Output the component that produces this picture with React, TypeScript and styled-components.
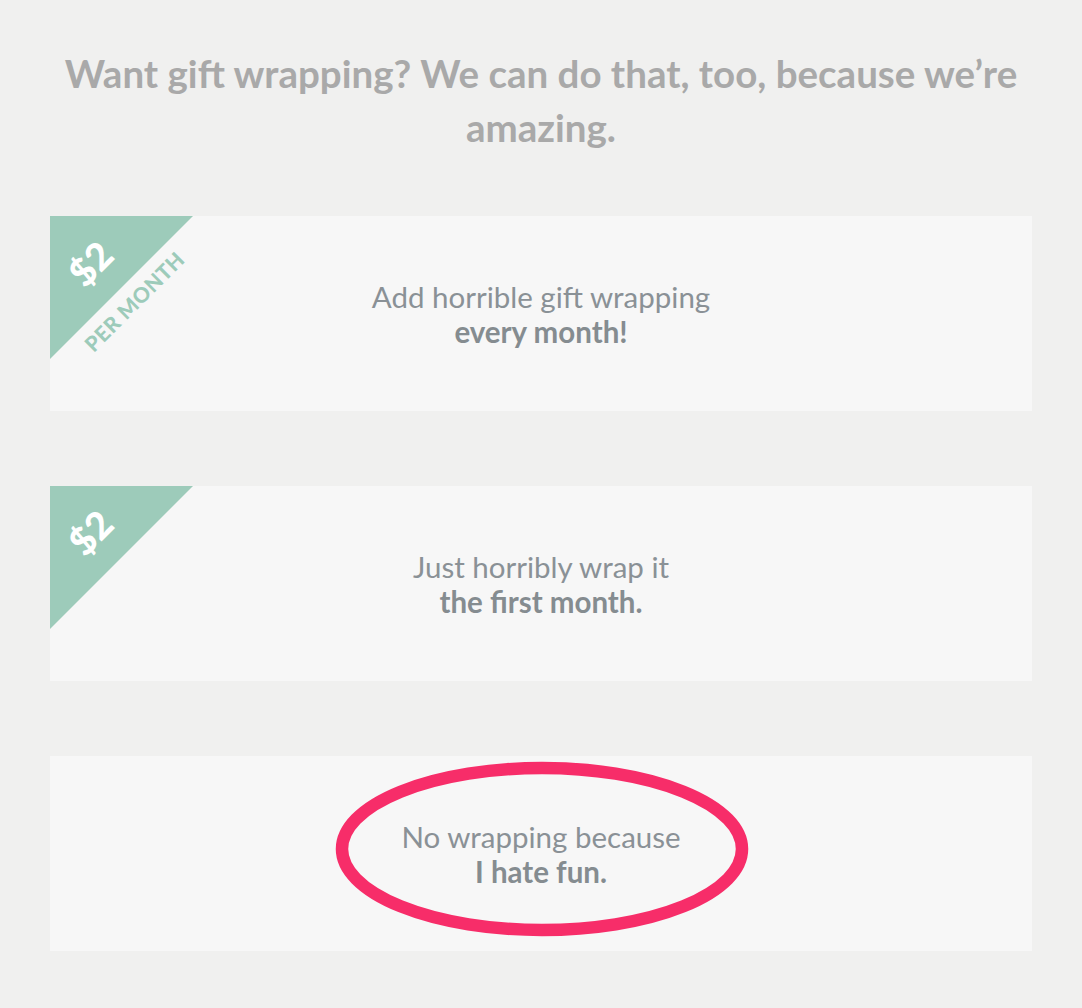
import React from "react";
import styled, { createGlobalStyle } from "styled-components";

const Global = createGlobalStyle`
  html, body { margin: 0; padding: 0; background: #f0f0ef; }
  body { font-family: Lato, "Liberation Sans", sans-serif; }
`;

const Page = styled.main`
  width: 1082px;
  box-sizing: border-box;
  padding: 46px 50px 56px;
  display: flex;
  flex-direction: column;
  align-items: stretch;
`;

const Heading = styled.h1`
  margin: 0 0 62px;
  text-align: center;
  font-size: 38.5px;
  line-height: 54px;
  font-weight: 700;
  color: #a9a9a9;
  white-space: nowrap;
`;

const List = styled.div`
  display: flex;
  flex-direction: column;
  gap: 75px;
`;

const Card = styled.div`
  position: relative;
  height: 195px;
  background: #f7f7f7;
  display: flex;
  align-items: center;
  justify-content: center;
  overflow: hidden;
`;

const Copy = styled.p`
  margin: 0;
  text-align: center;
  font-size: 29.5px;
  line-height: 35px;
  color: #8a9196;
  font-weight: 400;
  position: relative;
  z-index: 1;
`;

const Strong = styled.strong`
  display: block;
  font-weight: 700;
  color: #858c90;
`;

const Corner = styled.div`
  position: absolute;
  left: 0;
  top: 0;
  width: 143px;
  height: 143px;
  background: #9dcbba;
  clip-path: polygon(0 0, 100% 0, 0 100%);
`;

const Price = styled.span<{ $x: number; $y: number }>`
  position: absolute;
  left: ${(p) => p.$x}px;
  top: ${(p) => p.$y}px;
  transform: translate(-50%, -50%) rotate(-45deg);
  color: #ffffff;
  font-weight: 900;
  font-size: 38px;
  line-height: 1;
  white-space: nowrap;
`;

const Per = styled.span<{ $x: number; $y: number }>`
  position: absolute;
  left: ${(p) => p.$x}px;
  top: ${(p) => p.$y}px;
  transform: translate(-50%, -50%) rotate(-45deg);
  color: #9dcbba;
  font-weight: 900;
  font-size: 21px;
  letter-spacing: 0.5px;
  line-height: 1;
  white-space: nowrap;
`;

const Ring = styled.svg`
  position: absolute;
  left: 0;
  top: 0;
  width: 100%;
  height: 100%;
  pointer-events: none;
  z-index: 2;
`;

export default function App() {
  return (
    <>
      <Global />
      <Page>
        <Heading>
          Want gift wrapping? We can do that, too, because we’re
          <br />
          amazing.
        </Heading>
        <List>
          <Card>
            <Corner />
            <Price $x={40} $y={47}>$2</Price>
            <Per $x={84} $y={85}>PER MONTH</Per>
            <Copy>
              Add horrible gift wrapping
              <Strong>every month!</Strong>
            </Copy>
          </Card>
          <Card>
            <Corner />
            <Price $x={40} $y={46}>$2</Price>
            <Copy>
              Just horribly wrap it
              <Strong>the first month.</Strong>
            </Copy>
          </Card>
          <Card>
            <Copy>
              No wrapping because
              <Strong>I hate fun.</Strong>
            </Copy>
            <Ring viewBox="0 0 982 195" preserveAspectRatio="none">
              <ellipse cx="492" cy="93" rx="200" ry="81" fill="none" stroke="#f72d69" strokeWidth="12.5" />
            </Ring>
          </Card>
        </List>
      </Page>
    </>
  );
}
